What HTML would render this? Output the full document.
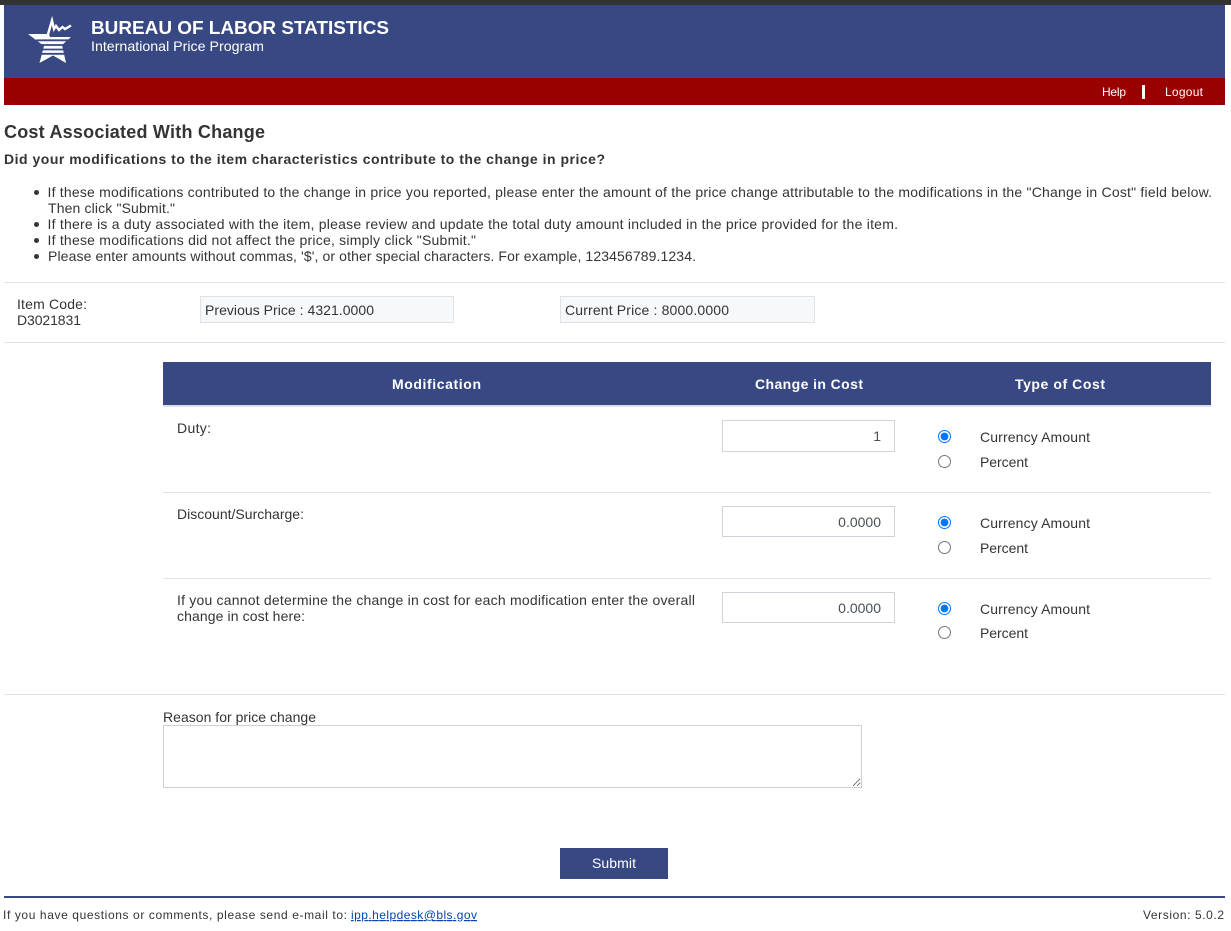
<!DOCTYPE html>
<html lang="en">
<head>
<meta charset="utf-8">
<title>Cost Associated With Change</title>
<style>
html,body{margin:0;padding:0;background:#fff;width:1231px;height:931px;overflow:hidden;font-family:"Liberation Sans",Arial,sans-serif;color:#343434}
.a{position:absolute;box-sizing:border-box}
.hr{position:absolute;left:4px;width:1221px;height:1px;background:#e1e2e6}
.rl{position:absolute;left:163px;width:1048px;height:1px;background:#e1e2e6}
.box{position:absolute;box-sizing:border-box;height:27px;background:#f7f8fa;border:1px solid #dfe2e7}
input[type=text]{position:absolute;box-sizing:border-box;left:722px;width:173px;border:1px solid #ced4da;background:#fff;text-align:right;padding:0 13px 0 0;margin:0;font:14px "Liberation Sans",Arial,sans-serif;color:#495057;outline:none}
input[type=radio]{position:absolute;left:938px;width:13px;height:13px;margin:0}
textarea{position:absolute;box-sizing:border-box;left:163px;top:725px;width:699px;height:63px;border:1px solid #cfcfcf;margin:0;padding:0;background:#fff;outline:none}
svg.t{position:absolute;left:0;top:0;width:1231px;height:931px;pointer-events:none}
svg.t text{font-family:"Liberation Sans",Arial,sans-serif;font-size:14px;fill:#343434;white-space:pre}
svg.t .w{fill:#fff}
svg.t .b{font-weight:700}
</style>
</head>
<body>
<div class="a" style="left:0;top:0;width:1231px;height:5px;background:#333"></div>
<div class="a" style="left:4px;top:5px;width:1221px;height:73px;background:#384883"></div>
<div class="a" style="left:4px;top:78px;width:1221px;height:27px;background:#990000"></div>
<div class="a" style="left:1142px;top:85px;width:3px;height:14px;background:#fff"></div>

<svg class="a" style="left:0;top:0" width="100" height="75" viewBox="0 0 100 75">
  <path d="M28 34H49L50 37H71L62 45L66 63L53 55.5L39.500 63L44 46Z" fill="#fff"/>
  <path d="M36 40.300H68M40 45H66M40 49.500H66M40 53.800H66" stroke="#384883" fill="none" stroke-width="1.800"/>
  <polyline points="47.500,36 52,20.500 54,29 56,26 59,30 62.500,27 65,29 71,25.500" fill="none" stroke="#fff" stroke-width="2.400"/>
</svg>

<div class="hr" style="top:282px"></div>
<div class="hr" style="top:342px"></div>
<div class="hr" style="top:694px"></div>

<div class="box" style="left:200px;top:296px;width:254px"></div>
<div class="box" style="left:560px;top:296px;width:255px"></div>

<div class="a" style="left:163px;top:362px;width:1048px;height:43px;background:#384883"></div>
<div class="a" style="left:163px;top:405px;width:1048px;height:2px;background:#dee2e6"></div>
<div class="rl" style="top:492px"></div>
<div class="rl" style="top:578px"></div>

<input type="text" value="1" style="top:420px;height:32px">
<input type="text" value="0.0000" style="top:506px;height:31px">
<input type="text" value="0.0000" style="top:592px;height:31px">

<input type="radio" name="r1" checked style="top:430px">
<input type="radio" name="r1" style="top:455px">
<input type="radio" name="r2" checked style="top:516px">
<input type="radio" name="r2" style="top:541px">
<input type="radio" name="r3" checked style="top:602px">
<input type="radio" name="r3" style="top:626px">

<textarea></textarea>

<div class="a" style="left:560px;top:848px;width:108px;height:31px;background:#384883"></div>
<div class="a" style="left:4px;top:896px;width:1221px;height:2px;background:#384883"></div>

<div class="a" style="left:34px;top:190px;width:5px;height:5px;border-radius:50%;background:#343434"></div>
<div class="a" style="left:34px;top:222px;width:5px;height:5px;border-radius:50%;background:#343434"></div>
<div class="a" style="left:34px;top:238px;width:5px;height:5px;border-radius:50%;background:#343434"></div>
<div class="a" style="left:34px;top:254px;width:5px;height:5px;border-radius:50%;background:#343434"></div>

<svg class="t" viewBox="0 0 1231 931">
  <text class="w b" x="91" y="34" style="font-size:18px" textLength="298" lengthAdjust="spacingAndGlyphs">BUREAU OF LABOR STATISTICS</text>
  <text class="w" x="91" y="51" textLength="173" lengthAdjust="spacingAndGlyphs">International Price Program</text>
  <text class="w" x="1102" y="96" style="font-size:12px" textLength="24">Help</text>
  <text class="w" x="1165" y="96" style="font-size:12px" textLength="38">Logout</text>

  <text class="b" x="4" y="138" style="font-size:18px" textLength="261">Cost Associated With Change</text>
  <text class="b" x="4" y="164" textLength="601">Did your modifications to the item characteristics contribute to the change in price?</text>

  <text x="47.500" y="197" textLength="1164.500">If these modifications contributed to the change in price you reported, please enter the amount of the price change attributable to the modifications in the "Change in Cost" field below.</text>
  <text x="48" y="213" textLength="127">Then click "Submit."</text>
  <text x="47.500" y="229" textLength="850.500">If there is a duty associated with the item, please review and update the total duty amount included in the price provided for the item.</text>
  <text x="47.500" y="245" textLength="428.500">If these modifications did not affect the price, simply click "Submit."</text>
  <text x="48" y="261" textLength="648">Please enter amounts without commas, '$', or other special characters. For example, 123456789.1234.</text>

  <text x="17" y="309" textLength="70">Item Code:</text>
  <text x="17" y="325" textLength="64">D3021831</text>
  <text x="205" y="315" textLength="169">Previous Price : 4321.0000</text>
  <text x="565" y="315" textLength="164">Current Price : 8000.0000</text>

  <text class="w b" x="392" y="389" textLength="89">Modification</text>
  <text class="w b" x="755" y="389" textLength="108">Change in Cost</text>
  <text class="w b" x="1015" y="389" textLength="90">Type of Cost</text>

  <text x="177" y="433" textLength="34">Duty:</text>
  <text x="177" y="519" textLength="127">Discount/Surcharge:</text>
  <text x="177" y="605" textLength="518">If you cannot determine the change in cost for each modification enter the overall</text>
  <text x="177" y="621" textLength="128">change in cost here:</text>

  <text x="980" y="442" textLength="110">Currency Amount</text>
  <text x="980" y="467" textLength="48">Percent</text>
  <text x="980" y="528" textLength="110">Currency Amount</text>
  <text x="980" y="553" textLength="48">Percent</text>
  <text x="980" y="614" textLength="110">Currency Amount</text>
  <text x="980" y="638" textLength="48">Percent</text>

  <text x="163" y="722" textLength="153">Reason for price change</text>
  <text class="w" x="592" y="868" textLength="44">Submit</text>

  <text x="3" y="919" style="font-size:12px" textLength="344">If you have questions or comments, please send e-mail to:</text>
  <a><text x="351" y="919" style="font-size:12px;fill:#0645ad;text-decoration:underline" textLength="126">ipp.helpdesk@bls.gov</text></a>
  <text x="1143" y="919" style="font-size:12px" textLength="81">Version: 5.0.2</text>
</svg>
</body>
</html>
